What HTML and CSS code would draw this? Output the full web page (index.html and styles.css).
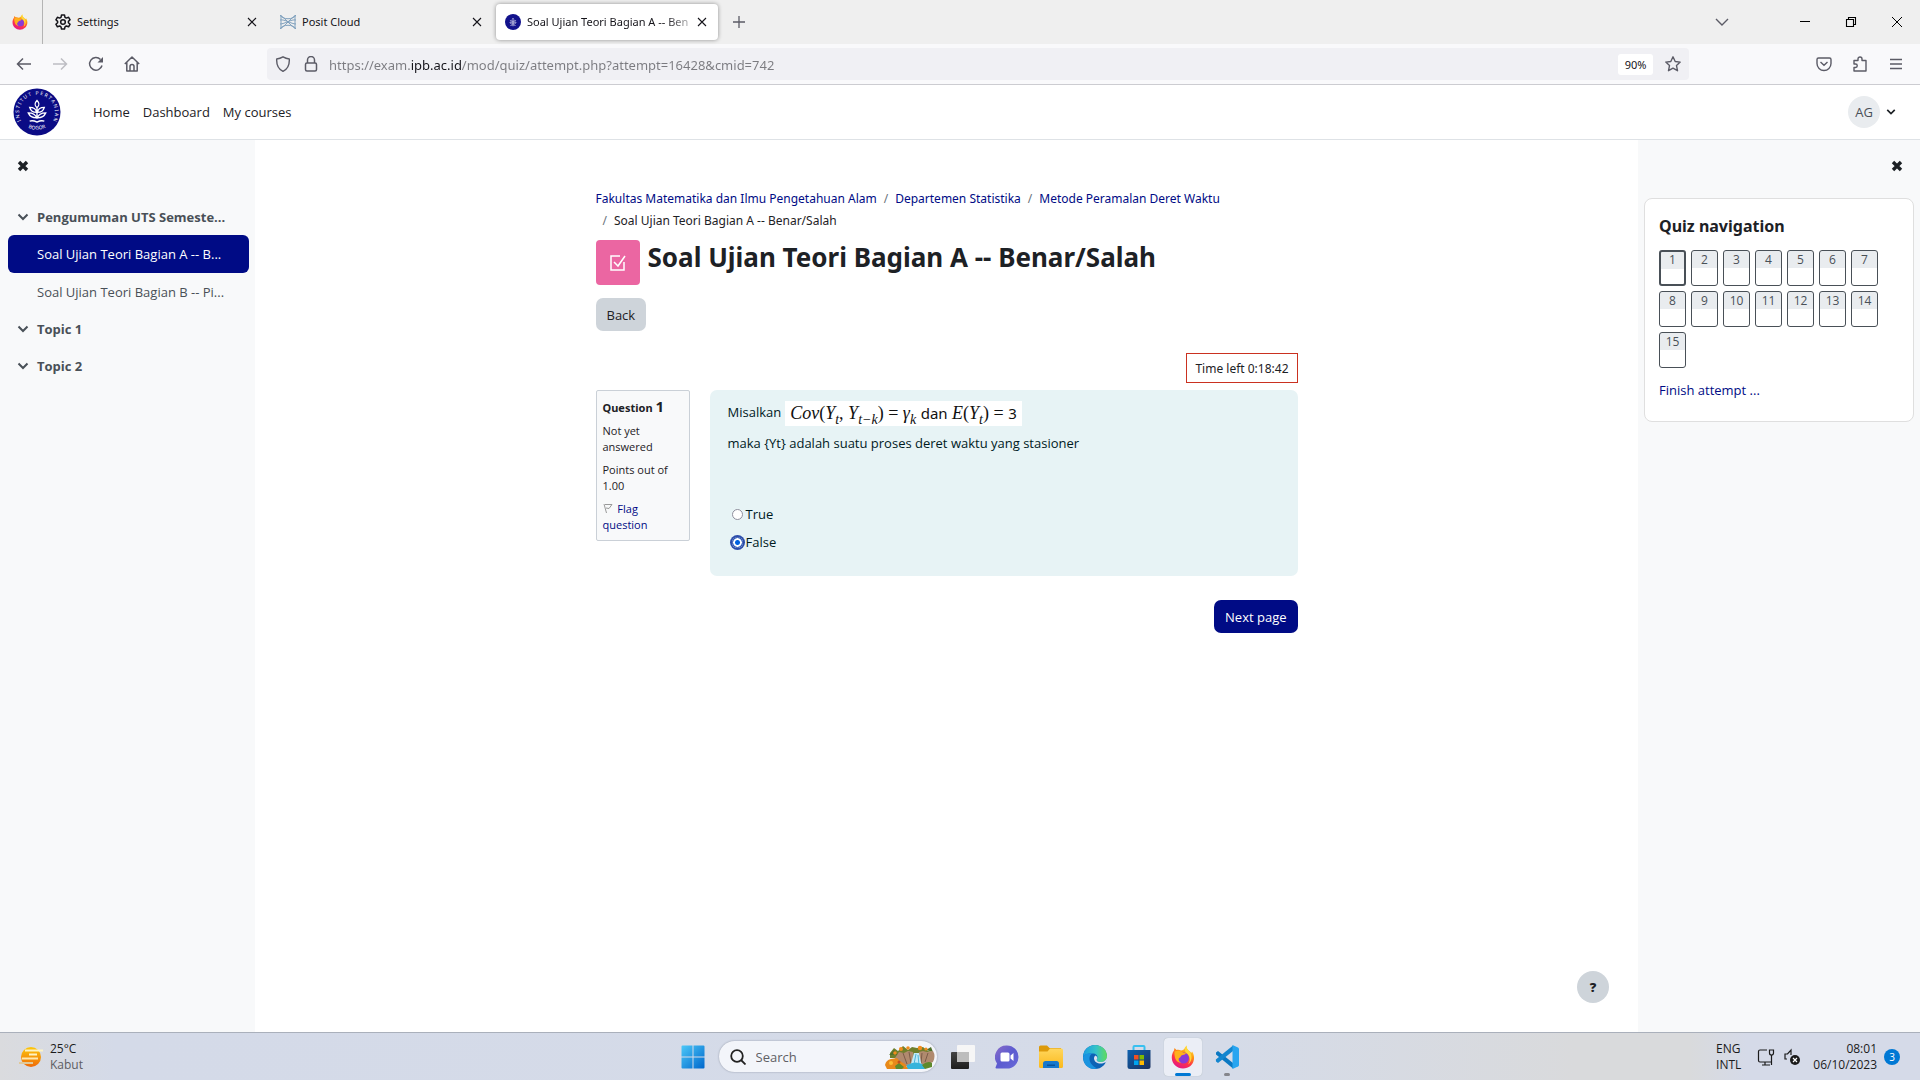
FILE: index.html
```html
<!DOCTYPE html>
<html lang="id">
<head>
<meta charset="utf-8">
<title>Soal Ujian Teori Bagian A -- Benar/Salah</title>
<link rel="stylesheet" href="styles.css">
</head>
<body>
<svg class="defs" aria-hidden="true">
  <defs>
    <linearGradient id="ffBody" x1="0.8" y1="0" x2="0.3" y2="1"><stop offset="0" stop-color="#fff44f"/><stop offset="0.35" stop-color="#ff980e"/><stop offset="0.65" stop-color="#ff3647"/><stop offset="1" stop-color="#e31587"/></linearGradient>
    <linearGradient id="winBlue" x1="0" y1="0" x2="1" y2="1"><stop offset="0" stop-color="#4cc8f8"/><stop offset="1" stop-color="#0067cc"/></linearGradient>
    <linearGradient id="chatFill" x1="0" y1="0" x2="1" y2="1"><stop offset="0" stop-color="#8b6cc8"/><stop offset="0.5" stop-color="#5b5bd0"/><stop offset="1" stop-color="#6a6ad8"/></linearGradient>
    <linearGradient id="folderFill" x1="0" y1="0" x2="0" y2="1"><stop offset="0" stop-color="#ffd75e"/><stop offset="1" stop-color="#fbb91c"/></linearGradient>
    <linearGradient id="edgeTop" x1="0" y1="0" x2="1" y2="0"><stop offset="0" stop-color="#1b9de2"/><stop offset="0.55" stop-color="#36c3c8"/><stop offset="1" stop-color="#5fdc5a"/></linearGradient>
    <linearGradient id="storeFill" x1="0" y1="0" x2="1" y2="1"><stop offset="0" stop-color="#0d62b0"/><stop offset="1" stop-color="#1c2f5c"/></linearGradient>
    <linearGradient id="sunFill" x1="0" y1="0" x2="0" y2="1"><stop offset="0" stop-color="#fcc80c"/><stop offset="1" stop-color="#ef6a08"/></linearGradient>
    <linearGradient id="paneDark" x1="0" y1="0" x2="0" y2="1"><stop offset="0" stop-color="#444"/><stop offset="1" stop-color="#1d1d1d"/></linearGradient>
    <symbol id="firefox" viewBox="0 0 24 24">
      <path fill="url(#ffBody)" d="M16 0.5c-.8 1.500-.3 2.800.7 4 1.200 1.300 3 2.200 3.500 3.500l.9-1.500c1.600 2.500 2.200 4.800 1.900 7.500C22.400 19.700 17.800 23.500 12 23.500S1 19 .8 13C.7 10 1.500 7.500 3 5.500l.5-2.500 2 2C7 4.500 8.500 4.700 10 5.500c2-.2 3-1 3.500-2 .5-1.200 1.500-2.300 2.500-3z"/>
      <circle cx="12.500" cy="13" r="5.500" fill="#8a3ad6"/>
      <path fill="#ffb01c" d="M3.500 6.500c3-1 5.500-1 8 .8 1.300.9 2.500.8 3.500.9-1 1.500-3 1.600-4.500 2.300-1 .5-.5 2-2.500 2.500-1 2 .3 4.300 2.500 4.700-4 .5-7.500-3-7-11.200z"/>
      <path fill="#ffd83a" d="M16 .5c-.8 1.500-.3 2.800.7 4 2 2.300 4.300 4.300 3.800 9-.4 2.800-1.800 4.800-3.500 6 3.500-5 1.300-9.500-1.500-11.500-2.200-1.700-1.800-5.500.5-7.500z"/>
    </symbol>
    <symbol id="crossThin" viewBox="0 0 12 12"><path d="M2 2l8 8M10 2l-8 8" fill="none" stroke="currentColor" stroke-width="1.100"/></symbol>
    <symbol id="crossBold" viewBox="0 0 12 12"><path d="M2 2l8 8M10 2l-8 8" fill="none" stroke="currentColor" stroke-width="3.400"/></symbol>
    <symbol id="chevron" viewBox="0 0 12 12"><path d="M1.500 3.500L6 8l4.500-4.500" fill="none" stroke="currentColor" stroke-width="2"/></symbol>
    <symbol id="sprig" viewBox="0 0 24 26">
      <g fill="none" stroke="#fff" stroke-width="1.500"><path d="M12 8v13M12 1c-3 3-3 5 0 8 3-3 3-5 0-8zM11.500 14C8 14 5 12 4 8.500c4 0 7 1.500 7.500 5.500zM12.500 14c3.500 0 6.500-2 7.500-5.500-4 0-7 1.500-7.500 5.500zM11.500 20C7.500 20 4 18 2.500 14.500c4.500 0 8 1.500 9 5.500zM12.500 20c4 0 7.500-2 9-5.500-4.500 0-8 1.500-9 5.500zM4 23.500c3-1 5-.5 8 1 3-1.500 5-2 8-1"/></g>
    </symbol>
  </defs>
</svg>

<header class="browser">
  <div class="tabs">
    <div class="tabs-home"><svg class="i16"><use href="#firefox"/></svg></div>
    <div class="tab">
      <svg class="i16" viewBox="0 0 16 16" fill="none" stroke="#15141a" stroke-width="1.500"><path stroke-linejoin="round" d="M6.500 1h3l.5 2.300 1.300.8 2.300-.8 1.500 2.500-1.700 1.600v1.300l1.700 1.500-1.500 2.600-2.300-.8-1.300.8L9.500 15h-3L6 12.800 4.700 12l-2.300.8L.9 10.200l1.700-1.500V7.400L.9 5.800l1.500-2.500 2.300.8L6 3.300z"/><circle cx="8" cy="8" r="2.300"/></svg>
      <span class="tab-title">Settings</span>
      <button class="icon-btn" aria-label="Close Settings"><svg class="i12"><use href="#crossThin"/></svg></button>
    </div>
    <div class="tab">
      <svg class="i16" viewBox="0 0 16 16" fill="none" stroke="#7fa0bd" stroke-width="1"><path d="M0 1c3 5 13 5 16 0M0 15c3-5 13-5 16 0M0 1.500C5 3 11 13 16 14.500M16 1.500C11 3 5 13 0 14.500M0 6c5-1 11 4 16 4M16 6C11 5 5 10 0 10M1 1v14M15 1v14"/></svg>
      <span class="tab-title">Posit Cloud</span>
      <button class="icon-btn" aria-label="Close Posit Cloud"><svg class="i12"><use href="#crossThin"/></svg></button>
    </div>
    <div class="tab tab-active">
      <svg class="i16" viewBox="0 0 16 16"><circle cx="8" cy="8" r="8" fill="#12128c"/><use href="#sprig" x="4" y="3" width="8" height="10"/></svg>
      <span class="tab-title fade">Soal Ujian Teori Bagian A -- Ben</span>
      <button class="icon-btn" aria-label="Close Soal Ujian"><svg class="i12"><use href="#crossThin"/></svg></button>
    </div>
    <button class="icon-btn new-tab" aria-label="New tab"><svg class="i16" viewBox="0 0 16 16" stroke="#5b5b66" stroke-width="1.300"><path d="M8 2v12M2 8h12"/></svg></button>
    <div class="window-controls">
      <button class="icon-btn list-tabs" aria-label="List all tabs"><svg class="i16" viewBox="0 0 16 16" fill="none" stroke="#5b5b66" stroke-width="1.400"><path d="M2 5l6 6 6-6"/></svg></button>
      <button class="icon-btn" aria-label="Minimize"><svg class="i12" viewBox="0 0 12 12" stroke="#000"><path d="M1 5.500h10"/></svg></button>
      <button class="icon-btn" aria-label="Restore"><svg class="i12" viewBox="0 0 12 12" fill="none" stroke="#000" stroke-width="1.100"><path d="M1.500 3.500h7v7h-7zM3.500 3.500v-2h7v7h-2"/></svg></button>
      <button class="icon-btn" aria-label="Close window"><svg class="i12" viewBox="0 0 12 12" stroke="#000"><path d="M1 1l10 10M11 1L1 11"/></svg></button>
    </div>
  </div>
  <div class="toolbar">
    <div class="nav-buttons">
      <button class="icon-btn" aria-label="Back"><svg class="i16" viewBox="0 0 16 16" fill="none" stroke="#5b5b66" stroke-width="1.500"><path d="M15 8H1.500M7 2.500L1.500 8 7 13.500"/></svg></button>
      <button class="icon-btn" aria-label="Forward"><svg class="i16" viewBox="0 0 16 16" fill="none" stroke="#bdbdc3" stroke-width="1.500"><path d="M1 8h13.500M9 2.500L14.500 8 9 13.500"/></svg></button>
      <button class="icon-btn" aria-label="Reload"><svg class="i16" viewBox="0 0 16 16" fill="none" stroke="#5b5b66" stroke-width="1.500"><path d="M14 9.500A6.300 6.300 0 1 1 12.500 3.500"/><path fill="#5b5b66" stroke="none" d="M15 1v5.500H9.500z"/></svg></button>
      <button class="icon-btn" aria-label="Home"><svg class="i16" viewBox="0 0 16 16" fill="none" stroke="#5b5b66" stroke-width="1.500" stroke-linejoin="round"><path d="M.8 8L8 1l7.200 7M2.800 6.500V15h10.400V6.500M6 15v-4.500a2 2 0 0 1 4 0V15"/></svg></button>
    </div>
    <form class="address">
      <svg class="i16" viewBox="0 0 16 16" fill="none" stroke="#5b5b66" stroke-width="1.400"><path stroke-linejoin="round" d="M8 .8c2 1.200 4 1.900 6.300 2.200.3 5.500-1.500 10-6.300 12.300C3.200 13 1.400 8.500 1.700 3 4 2.700 6 2 8 .8z"/></svg>
      <svg class="i16" viewBox="0 0 16 16" fill="none" stroke="#5b5b66" stroke-width="1.500"><rect x="2.500" y="7" width="11" height="8" rx="1.500"/><path d="M4.500 7V4a3.500 3.500 0 0 1 7 0v3"/></svg>
      <input class="url" type="text" aria-label="Address" value="https://exam.ipb.ac.id/mod/quiz/attempt.php?attempt=16428&amp;cmid=742">
      <button class="zoom-level" type="button">90%</button>
      <button class="icon-btn" type="button" aria-label="Bookmark"><svg class="i16" viewBox="0 0 16 16" fill="none" stroke="#5b5b66" stroke-width="1.400" stroke-linejoin="round"><path d="M8 .8l2.200 4.700 5 .6-3.700 3.500 1 5.100L8 12.200l-4.500 2.500 1-5.100L.8 6.100l5-.6z"/></svg></button>
    </form>
    <div class="tool-icons">
      <button class="icon-btn" aria-label="Pocket"><svg class="i16" viewBox="0 0 16 16" fill="none" stroke="#5b5b66" stroke-width="1.400"><path d="M2.500 2h11q1.500 0 1.500 1.500V7.500a7 7 0 0 1-14 0V3.500Q1 2 2.500 2zM4.500 6L8 9.300 11.500 6"/></svg></button>
      <button class="icon-btn" aria-label="Extensions"><svg class="i16" viewBox="0 0 16 16" fill="none" stroke="#5b5b66" stroke-width="1.400" stroke-linejoin="round"><path d="M2 4.500h4V3a2 2 0 0 1 4 0v1.500h4V15H2v-3.500h1.500a1.700 1.700 0 0 0 0-3.500H2z"/></svg></button>
      <button class="icon-btn" aria-label="Menu"><svg class="i16" viewBox="0 0 16 16" stroke="#5b5b66" stroke-width="1.300"><path d="M2 3.500h12M2 8h12M2 12.500h12"/></svg></button>
    </div>
  </div>
</header>

<nav class="site-nav">
  <a class="logo" href="#" aria-label="IPB">
    <svg viewBox="0 0 48 48" width="48" height="48">
      <circle cx="24" cy="24" r="23.500" fill="#0b0b85"/>
      <path id="arcTop" fill="none" d="M10 36A18 18 0 1 1 38 36"/>
      <path id="arcBottom" fill="none" d="M9 35.500A21.500 21.500 0 0 0 39 35.500"/>
      <text class="seal"><textPath href="#arcTop" startOffset="50%">I N S T I T U T &#160; P E R T A N I A N</textPath></text>
      <text class="seal"><textPath href="#arcBottom" startOffset="50%">BOGOR</textPath></text>
      <use href="#sprig" x="13" y="9" width="22" height="29"/>
    </svg>
  </a>
  <a href="#">Home</a><a href="#">Dashboard</a><a href="#">My courses</a>
  <button class="user"><span class="avatar">AG</span><svg class="i8" viewBox="0 0 12 12"><use href="#chevron"/></svg></button>
</nav>

<div class="page">
  <aside class="drawer-left">
    <button class="icon-btn drawer-close" aria-label="Close course index"><svg class="i12"><use href="#crossBold"/></svg></button>
    <ul class="index">
      <li class="row head"><svg class="i12"><use href="#chevron"/></svg><a href="#">Pengumuman UTS Semeste...</a></li>
      <li class="row current"><a href="#">Soal Ujian Teori Bagian A -- B...</a></li>
      <li class="row"><a href="#">Soal Ujian Teori Bagian B -- Pi...</a></li>
      <li class="row head"><svg class="i12"><use href="#chevron"/></svg><a href="#">Topic 1</a></li>
      <li class="row head"><svg class="i12"><use href="#chevron"/></svg><a href="#">Topic 2</a></li>
    </ul>
  </aside>

  <main class="main">
    <div class="content">
      <ol class="breadcrumb">
        <li><a href="#">Fakultas Matematika dan Ilmu Pengetahuan Alam</a></li>
        <li><a href="#">Departemen Statistika</a></li>
        <li><a href="#">Metode Peramalan Deret Waktu</a></li>
        <li>Soal Ujian Teori Bagian A -- Benar/Salah</li>
      </ol>
      <div class="title">
        <span class="activity"><svg width="20" height="20" viewBox="0 0 20 20" fill="none" stroke="#fff" stroke-width="1.500"><path d="M12 3H3v14h13V9M6 9l4 4 7-10"/></svg></span>
        <h1>Soal Ujian Teori Bagian A -- Benar/Salah</h1>
      </div>
      <button class="btn back">Back</button>
      <div class="timer">Time left 0:18:42</div>
      <div class="question">
        <section class="info">
          <h2>Question <span>1</span></h2>
          <p>Not yet answered</p>
          <p>Points out of 1.00</p>
          <a href="#"><svg width="12" height="10" viewBox="0 0 12 10" fill="none" stroke="#999"><path d="M1 1l2.500 9M2 1.500h7L6 5.500 3 5"/></svg> Flag question</a>
        </section>
        <form class="formulation">
          <p class="statement">Misalkan <span class="formula"><i>Cov</i>(<i>Y<sub>t</sub></i>, <i>Y<sub>t−k</sub></i>) = <i>γ<sub>k</sub></i> <span class="word">dan</span> <i>E</i>(<i>Y<sub>t</sub></i>) = <span class="word">3</span></span></p>
          <p>maka {Yt} adalah suatu proses deret waktu yang stasioner</p>
          <div class="answers">
            <label><input type="radio" name="answer">True</label>
            <label><input type="radio" name="answer" checked>False</label>
          </div>
        </form>
      </div>
      <button class="btn next">Next page</button>
    </div>
    <button class="help" aria-label="Help">?</button>
  </main>

  <aside class="drawer-right">
    <button class="icon-btn drawer-close" aria-label="Close block drawer"><svg class="i12"><use href="#crossBold"/></svg></button>
    <section class="card">
      <h2>Quiz navigation</h2>
      <div class="numbers">
        <a class="here" href="#">1</a><a href="#">2</a><a href="#">3</a><a href="#">4</a><a href="#">5</a><a href="#">6</a><a href="#">7</a><a href="#">8</a><a href="#">9</a><a href="#">10</a><a href="#">11</a><a href="#">12</a><a href="#">13</a><a href="#">14</a><a href="#">15</a>
      </div>
      <a class="finish" href="#">Finish attempt ...</a>
    </section>
  </aside>
</div>

<footer class="taskbar">
  <div class="weather">
    <svg width="24" height="24" viewBox="0 0 24 24"><circle cx="12" cy="12" r="10" fill="url(#sunFill)"/><g stroke-width="2"><path stroke="#fdf3c4" d="M6 5.500h18M10 9.500h8"/><path stroke="#ffe9ae" d="M3 13.500h16"/><path stroke="#e0c99a" d="M0 18h14"/></g></svg>
    <div><div>25°C</div><div class="muted">Kabut</div></div>
  </div>
  <div class="apps">
    <button class="app" aria-label="Start"><svg class="i24" viewBox="0 0 24 24" fill="url(#winBlue)"><path d="M1.500 .5h10v11H.5v-10q0-1 1-1zM12.500.5h10q1 0 1 1v10h-11zM.5 12.500h11v11h-10q-1 0-1-1zM12.500 12.500h11v10q0 1-1 1h-10z"/></svg></button>
    <label class="search">
      <svg class="i16" viewBox="0 0 16 16" fill="none" stroke="#222" stroke-width="1.800"><circle cx="7" cy="7" r="5.800"/><path d="M11 11l4.500 4.500"/></svg>
      <input type="text" placeholder="Search" aria-label="Search">
      <svg width="50" height="24" viewBox="0 0 50 24">
        <path fill="#6f7f2c" d="M5 8l4-5 4 3 5-5 5 4 4-3 5 1 6-1 5 4 5 1v6H5z"/>
        <path fill="#4f6f2a" d="M4 10l5-5 4 5zM41 5l5-3 2 5z"/>
        <g fill="#f08c1c"><circle cx="16" cy="4" r="2"/><circle cx="23" cy="3" r="1.800"/><circle cx="35" cy="3" r="2.200"/><circle cx="10" cy="8" r="1.800"/><circle cx="41" cy="4" r="1.600"/></g>
        <path fill="#b08a6e" d="M10 13l4-6 5 1 4-2 5 1 2 14H14zM34 7l4-1 4 1 6-1q3 5 0 11l-9 4h-6z"/>
        <path stroke="#7b5b48" fill="none" d="M18 8l4 11M24 7l2 11M37 8l-1 10M43 8l-3 9"/>
        <path fill="#bfeaf8" d="M29 8h5l3 14H25z"/><path stroke="#4bb4dc" fill="none" d="M31 9l-2 10M33 10l1 10"/>
        <path fill="#35b4dc" d="M22 20q9-5 17 0l1 4H21z"/>
        <path fill="#e8891a" d="M0 20q1-5 6-6l6-1q2 3 8 6l3 5H2z"/><path fill="#5e8a2c" d="M10 21l4-3 5 4-2 2h-6zM37 20q6-5 10-2v4l-7 2z"/><circle cx="6" cy="18" r="2" fill="#fbbd33"/><circle cx="14" cy="17" r="1.500" fill="#c4501a"/>
      </svg>
    </label>
    <button class="app" aria-label="Task view"><svg class="i24" viewBox="0 0 24 24"><rect x="0" y="7" width="18" height="17" rx="1" fill="url(#paneDark)"/><rect x="6" y="0" width="18" height="17" rx="1" fill="#f6f6f6"/><path fill="#bdbdbd" d="M6 7h12v10H6z"/></svg></button>
    <button class="app" aria-label="Chat"><svg class="i24" viewBox="0 0 24 24"><path fill="url(#chatFill)" d="M12 .5a11.500 11.500 0 1 1 0 23H1.500q-1.500 0-.8-1.500L2 18.500A11.500 11.500 0 0 1 12 .5z"/><rect x="5.500" y="7.500" width="9" height="9" rx="1.500" fill="#fff"/><path fill="#fff" d="M15.500 10.500l3-2.500v8l-3-2.500z"/></svg></button>
    <button class="app" aria-label="File Explorer"><svg class="i24" viewBox="0 0 24 24"><path fill="#dd9a0a" d="M0 2q0-1.500 1.500-1.500H8l2.500 2.500H22V8H0z"/><path fill="url(#folderFill)" d="M0 6.500h8.500L11 3.500h11.500q1.500 0 1.500 1.500v16.500q0 1.500-1.500 1.500h-21Q0 23 0 21.500z"/><path fill="#1878cc" d="M4 23v-4.500Q4 16 6.500 16h11q2.500 0 2.500 2.500V23z"/><path fill="#0b5299" d="M8 19.500h8v1.500H8z"/></svg></button>
    <button class="app" aria-label="Edge"><svg class="i24" viewBox="0 0 24 24"><circle cx="12" cy="12" r="12" fill="#0d63b5"/><path fill="url(#edgeTop)" d="M0 11.500C.5 5 5.500 0 12 0c7 0 12 5 12 11 0 4-3 6-6.500 6-3 0-4.500-1.500-3.500-3 1-1.300.8-5-3.500-5.500C5 8 1 10 0 11.500z"/><path fill="#1a94e0" d="M0 12c1-2.500 5-4.500 9.500-3.500C6 10 5.500 14.500 8 18.500c1.500 2.300 4 4 6 5C6 25.500 0 19.500 0 12z"/><path fill="#dbe2ee" d="M12.500 10.500c-2.500 1.500-1.800 6 2 7.500 3 1.200 5.500.5 8-.8.5.3.5.8.2 1.300L24 15v-4c0 4-3 6-6.500 6-3 0-4.500-1.500-3.500-3 .7-1 .2-2.500-1.500-3.500z"/></svg></button>
    <button class="app" aria-label="Microsoft Store"><svg class="i24" viewBox="0 0 24 24"><path fill="none" stroke="#38c0f0" stroke-width="2" d="M6.500 6V2q0-1 1-1h9q1 0 1 1v4"/><path fill="url(#storeFill)" d="M.5 5h23v16.500q0 2.500-2.500 2.500H3Q.5 24 .5 21.500z"/><path fill="#f25022" d="M7 10h4.500v4.500H7z"/><path fill="#7fba00" d="M12.500 10H17v4.500h-4.500z"/><path fill="#00a4ef" d="M7 15.500h4.500V20H7z"/><path fill="#ffb900" d="M12.500 15.500H17V20h-4.500z"/></svg></button>
    <button class="app app-open" aria-label="Firefox"><svg class="i24"><use href="#firefox"/></svg></button>
    <button class="app app-idle" aria-label="Visual Studio Code"><svg class="i24" viewBox="0 0 24 24"><path fill="#0b78c2" d="M1 7.500L3 6l15 12v5.500L1 9.500z"/><path fill="#1486cf" d="M1 16.500L3 18 18 6V.5L.8 14.500z"/><path fill="#28a5f0" d="M17.500 0L23 2.500q1 .5 1 1.500v16q0 1-1 1.500L17.500 24z"/></svg></button>
  </div>
  <div class="tray">
    <div class="lang"><div>ENG</div><div>INTL</div></div>
    <svg class="net" width="18" height="18" viewBox="0 0 18 18" fill="none" stroke="#1b1b1b" stroke-width="1.200"><path d="M10 2H3Q1.500 2 1.500 3.500v9Q1.500 14 3 14h12M8 14v3M5 17h8M12.500 2h4v3q0 2-2 2t-2-2zM14.500 7v10"/></svg>
    <svg width="18" height="18" viewBox="0 0 18 18" fill="none" stroke="#1b1b1b" stroke-width="1.200"><path d="M8 7V2L4.500 6H2v5h2"/><circle cx="12" cy="12" r="5" fill="#1b1b1b" stroke="none"/><path stroke="#fff" d="M10 10l4 4M14 10l-4 4"/></svg>
    <div class="clock"><div>08:01</div><div>06/10/2023</div></div>
    <span class="badge">3</span>
  </div>
</footer>
</body>
</html>
```
FILE: styles.css
```css
* { box-sizing: border-box; }
body {
  margin: 0;
  min-height: 100vh;
  display: flex;
  flex-direction: column;
  font: 13px/22px "Open Sans", "Noto Sans", sans-serif;
  color: #1d2125;
  background: #fff;
}
a { color: #000b85; text-decoration: none; }
button, input { font: inherit; color: inherit; }
button { border: 0; padding: 0; background: none; cursor: pointer; }
h1, h2, p, ul, ol { margin: 0; padding: 0; }
h1, h2 { font-family: "Noto Sans", sans-serif; }
ul, ol { list-style: none; }
svg { display: block; flex: none; }
.defs { position: absolute; width: 0; height: 0; }
.i8 { width: 10px; height: 10px; }
.i12 { width: 12px; height: 12px; }
.i16 { width: 16px; height: 16px; }
.i24 { width: 24px; height: 24px; }
.icon-btn { display: flex; align-items: center; justify-content: center; flex: none; }

/* Browser chrome */
.browser { font-family: "Noto Sans", sans-serif; font-size: 11px; color: #15141a; }
.tabs { display: flex; align-items: center; height: 44px; background: #efefef; }
.tabs-home { display: flex; align-items: center; width: 43px; height: 44px; padding-left: 12px; border-right: 1px solid #b4b4b4; }
.tab { display: flex; align-items: center; gap: 6px; width: 222px; height: 36px; margin-right: 3px; padding: 0 10px 0 9px; border-radius: 4px; }
.tabs-home + .tab { margin-left: 3px; }
.tab-active { background: #fff; box-shadow: 0 0 4px rgba(0, 0, 0, .4); }
.tab-title { flex: 1; min-width: 0; white-space: nowrap; }
.fade { mask-image: linear-gradient(to right, #000 85%, rgba(0, 0, 0, .3)); }
.new-tab { margin-left: 10px; }
.window-controls { display: flex; align-items: center; gap: 34px; margin-left: auto; padding-right: 17px; }
.list-tabs { margin-right: 35px; }
.toolbar { display: flex; align-items: center; height: 41px; background: #f9f9fb; border-bottom: 1px solid #ccccd1; }
.nav-buttons { display: flex; gap: 20px; width: 267px; padding-left: 16px; }
.address { display: flex; align-items: center; flex: 1; gap: 12px; height: 32px; padding: 0 8px; border-radius: 4px; background: #f0f0f4; }
.url {
  flex: 1;
  min-width: 0;
  margin-left: -2px;
  padding: 2px 0 0;
  border: 0;
  outline: 0;
  font-size: 13px;
  color: transparent;
  background: linear-gradient(to right, #7b7b80 82px, #15141a 82px, #15141a 133px, #7b7b80 133px);
  -webkit-background-clip: text;
  background-clip: text;
}
.zoom-level { width: 35px; height: 21px; border-radius: 3px; background: #fff; font-size: 11px; line-height: 21px; }
.tool-icons { display: flex; gap: 20px; width: 231px; padding-right: 16px; justify-content: flex-end; }

/* Site navigation */
.site-nav { display: flex; align-items: center; gap: 13px; height: 55px; padding: 0 24px 0 13px; border-bottom: 1px solid #dee2e6; }
.site-nav a { color: #1d2125; }
.logo { margin-right: 19px; }
.seal { fill: #fff; font: 5px "Noto Sans", sans-serif; text-anchor: middle; }
.user { display: flex; align-items: center; gap: 6px; margin-left: auto; }
.avatar { width: 32px; height: 32px; border-radius: 50%; background: #e9ecef; color: #495057; line-height: 32px; }

/* Page columns */
.page { flex: 1; display: flex; }
.drawer-left { width: 255px; padding: 16px 6px 0 8px; background: #f8f9fa; }
.drawer-right { width: 282px; padding: 16px 6px 0; background: #f8f9fa; }
.drawer-close { width: 30px; height: 20px; }
.drawer-right .drawer-close { margin: 0 2px 22px auto; }
.index { margin-top: 22px; }
.row { display: flex; align-items: center; height: 37px; padding-left: 29px; border-radius: 6px; }
.row a { color: #495057; white-space: nowrap; }
.head { gap: 8px; padding-left: 9px; font-weight: 700; color: #495057; }
.current { width: 241px; height: 38px; background: #000b85; }
.current a { color: #fff; }

.main { flex: 1; min-width: 0; position: relative; padding-top: 48px; }
.content { display: flex; flex-direction: column; max-width: 702px; margin: 0 auto; }
.breadcrumb { display: flex; flex-wrap: wrap; padding-right: 30px; font-family: "Noto Sans", sans-serif; font-size: 12px; }
.breadcrumb li + li { padding-left: 7px; }
.breadcrumb li + li::before { content: "/"; padding-right: 7px; color: #6a737b; }
.title { display: flex; gap: 8px; margin-top: 8px; }
.activity { display: flex; align-items: center; justify-content: center; width: 44px; height: 45px; border-radius: 4px; background: #eb66a2; }
h1 { font-size: 26px; line-height: 34px; }
.btn { height: 33px; padding: 0 11px; border-radius: 7px; }
.back { align-self: flex-start; margin-top: 13px; background: #ced4da; }
.timer { align-self: flex-end; margin-top: 22px; padding: 4px 8px 2px; border: 1px solid #ca3120; font-family: "Noto Sans", sans-serif; font-size: 12px; }
.question { display: flex; align-items: flex-start; gap: 20px; margin-top: 7px; }
.info { display: flex; flex-direction: column; gap: 7px; width: 94px; padding: 8px 6px 7px; border: 1px solid #cad0d7; border-radius: 2px; background: #f8f9fa; font-size: 11px; line-height: 16px; }
.info h2 { font-size: 11px; line-height: 16px; }
.info h2 span { font-size: 15px; line-height: 14px; }
.info svg { display: inline-block; }
.formulation { flex: 1; height: 186px; padding: 11px 18px; border-radius: 7px; background: #e7f3f5; color: #001a1e; }
.statement { display: flex; gap: 4px; height: 31px; }
.formula { height: 25px; padding: 0 5px; background: #fff; color: #111; font: 18px/25px "Liberation Serif", serif; white-space: nowrap; }
.formula sub { font-size: 14px; line-height: 1px; }
.word { font: 15px/25px "Noto Sans", sans-serif; }
.answers { display: flex; flex-direction: column; gap: 6px; margin-top: 49px; padding-left: 4px; }
.answers label { display: flex; align-items: center; gap: 3px; }
.answers input { appearance: none; width: 11px; height: 11px; margin: 0; border: 1px solid #8f8f9d; border-radius: 50%; background: #fff; }
.answers input:checked { background: radial-gradient(#0061e0 2px, #fff 3px, #fff 4px, #0061e0 5px); border-color: #2c4dab; box-shadow: 0 0 0 2px #2c4dab; }
.next { align-self: flex-end; margin-top: 24px; background: #000b85; color: #fff; }
.help { position: absolute; right: 29px; bottom: 29px; width: 32px; height: 32px; border-radius: 50%; background: #ced4da; font-weight: 800; }

.card { padding: 15px 14px 20px; border: 1px solid #dfdfdf; border-radius: 8px; background: #fff; }
.card h2 { font-size: 16px; line-height: 24px; }
.numbers { display: grid; grid-template-columns: repeat(7, 27px); gap: 5px; margin: 12px 0 11px; }
.numbers a { height: 36px; border: 1px solid #495057; border-radius: 3px; background: linear-gradient(#e9ecef 17px, #fff 17px); color: #495057; font-size: 12px; line-height: 18px; text-align: center; }
.numbers .here { border-width: 2px; line-height: 16px; }

/* Taskbar */
.taskbar { display: grid; grid-template-columns: 1fr auto 1fr; align-items: center; height: 48px; padding: 0 20px 0 19px; border-top: 1px solid #aab0bb; background: linear-gradient(to right, #dadbde, #d4dae8 6%, #d5dbe8 64%, #d9dadc 82%, #d9dadc 88%, #d5dae8 91%, #d5dae8); font-size: 12px; line-height: 16px; color: #1b1b1b; }
.weather { display: flex; align-items: center; gap: 7px; }
.muted { color: #5d5d62; }
.apps { display: flex; align-items: center; }
.app { position: relative; display: flex; align-items: center; justify-content: center; width: 38px; height: 38px; margin: 0 3px; border-radius: 4px; }
.app-open { background: #ebeef6; box-shadow: 0 0 1px #9aa; }
.app-open::after, .app-idle::after { content: ""; position: absolute; bottom: 0; width: 16px; height: 3px; border-radius: 2px; background: #0078d4; }
.app-idle::after { width: 6px; background: #85868c; }
.search { display: flex; align-items: center; gap: 10px; width: 218px; height: 31px; margin: 0 4px; padding: 0 2px 0 11px; border-radius: 16px; background: #f3f5fa; box-shadow: 0 0 2px #8d94a3; }
.search input { flex: 1; min-width: 0; padding: 0; border: 0; outline: 0; background: none; font-size: 13px; }
.search input::placeholder { color: #5f6065; opacity: 1; }
.tray { display: flex; align-items: center; justify-content: flex-end; }
.lang { margin-right: 16px; }
.net { margin-right: 8px; }
.clock { margin: 0 7px 0 12px; text-align: right; }
.badge { width: 16px; height: 16px; border-radius: 50%; background: #0078d4; color: #fff; font-size: 10px; text-align: center; }
```
